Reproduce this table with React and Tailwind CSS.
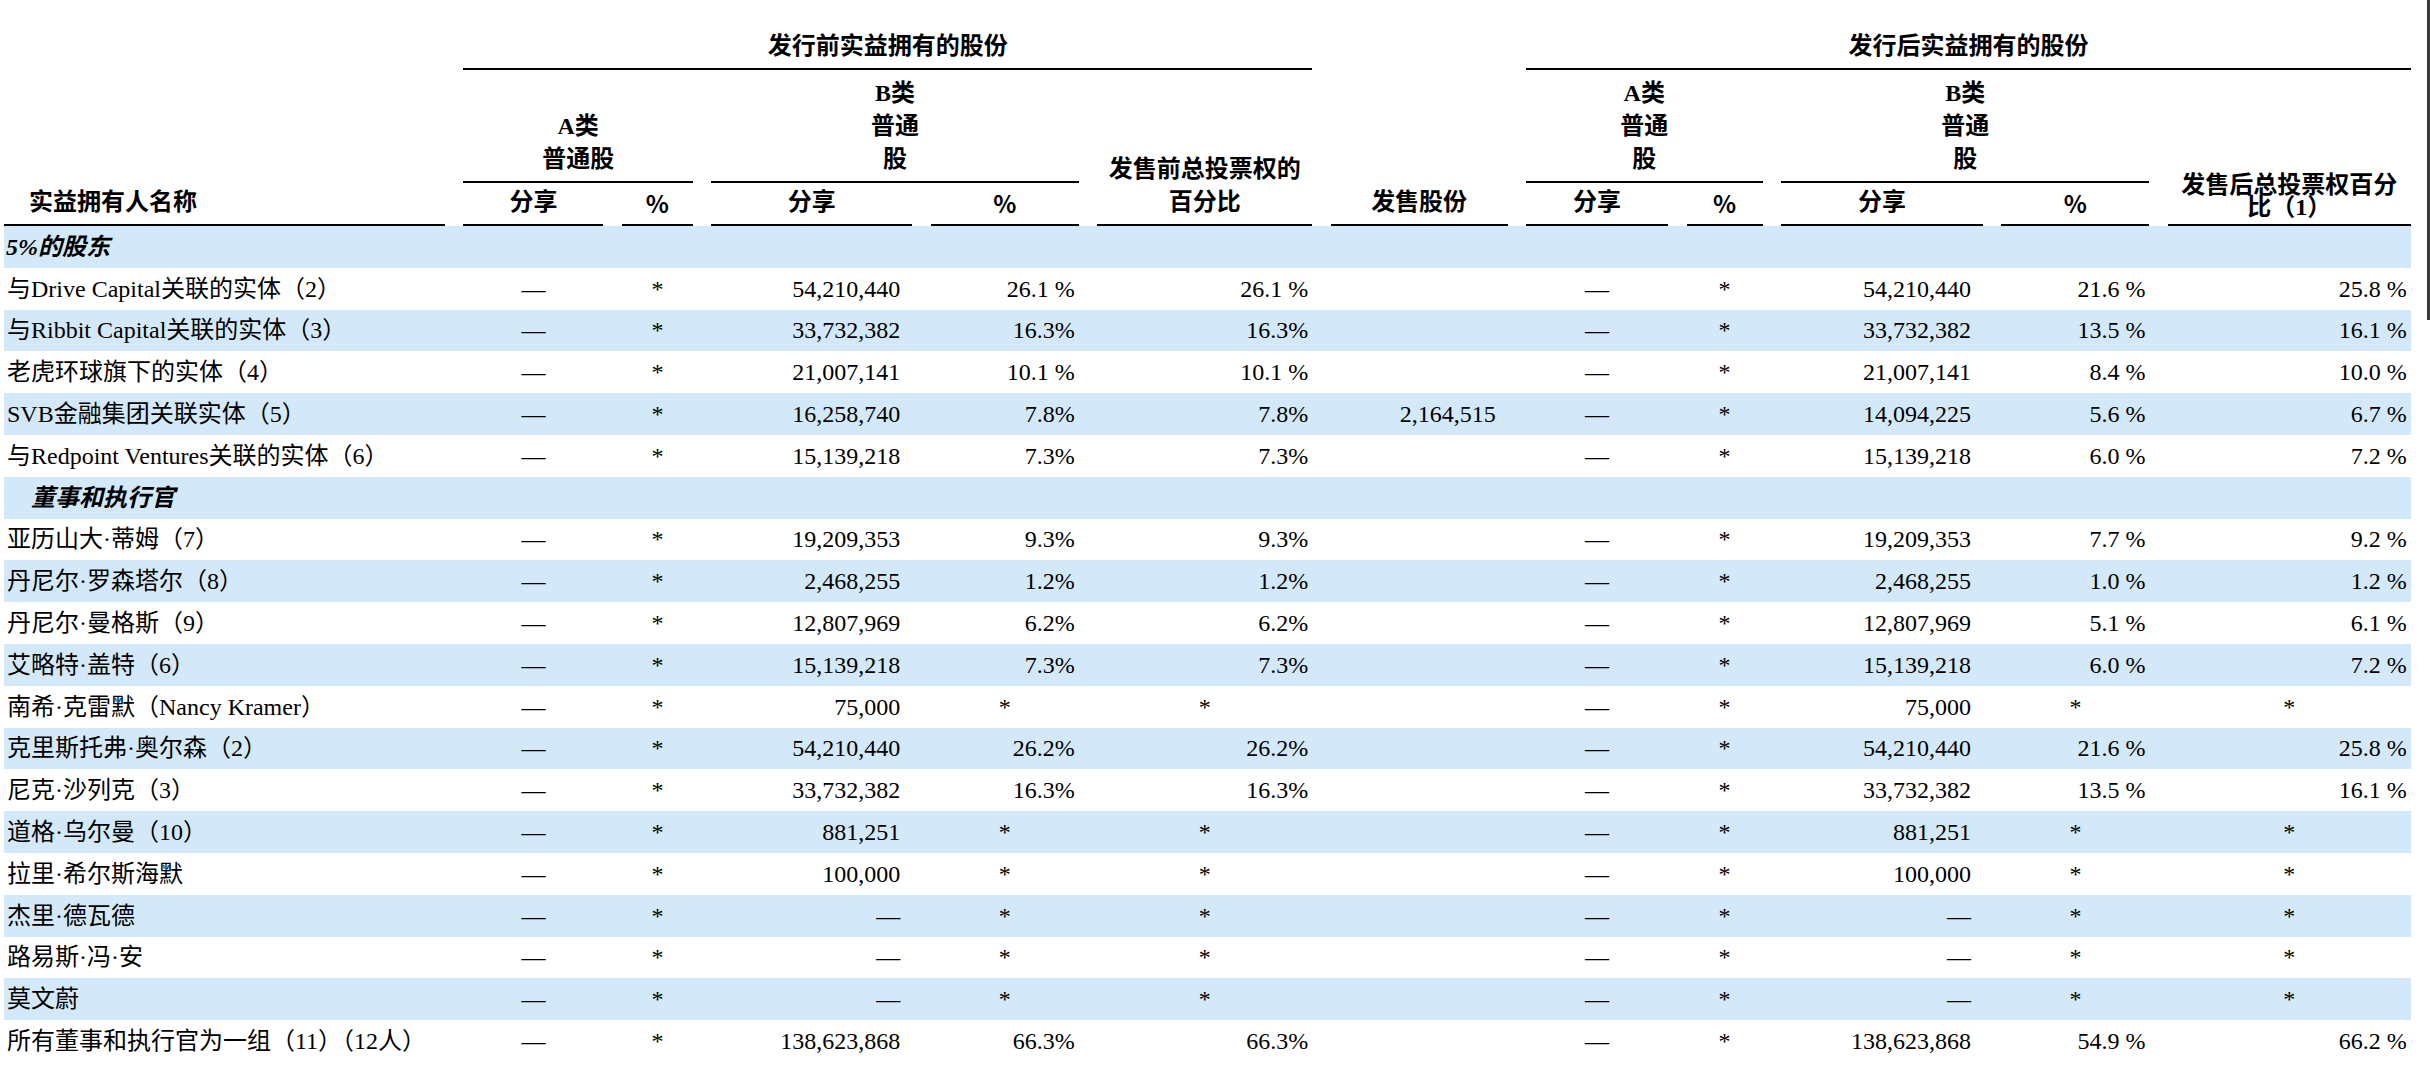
import React from "react";

const COLS =
  "grid grid-cols-[441px_140px_71px_201px_148px_215px_177px_142px_76px_202px_148px_243px] gap-x-[18.45px]";

const ROWS = [
  { section: "5%的股东" },
  ["与Drive Capital关联的实体（2）", "—", "*", "54,210,440", "26.1 %", "26.1 %", "", "—", "*", "54,210,440", "21.6 %", "25.8 %"],
  ["与Ribbit Capital关联的实体（3）", "—", "*", "33,732,382", "16.3%", "16.3%", "", "—", "*", "33,732,382", "13.5 %", "16.1 %"],
  ["老虎环球旗下的实体（4）", "—", "*", "21,007,141", "10.1 %", "10.1 %", "", "—", "*", "21,007,141", "8.4 %", "10.0 %"],
  ["SVB金融集团关联实体（5）", "—", "*", "16,258,740", "7.8%", "7.8%", "2,164,515", "—", "*", "14,094,225", "5.6 %", "6.7 %"],
  ["与Redpoint Ventures关联的实体（6）", "—", "*", "15,139,218", "7.3%", "7.3%", "", "—", "*", "15,139,218", "6.0 %", "7.2 %"],
  { section: "董事和执行官", indent: true },
  ["亚历山大·蒂姆（7）", "—", "*", "19,209,353", "9.3%", "9.3%", "", "—", "*", "19,209,353", "7.7 %", "9.2 %"],
  ["丹尼尔·罗森塔尔（8）", "—", "*", "2,468,255", "1.2%", "1.2%", "", "—", "*", "2,468,255", "1.0 %", "1.2 %"],
  ["丹尼尔·曼格斯（9）", "—", "*", "12,807,969", "6.2%", "6.2%", "", "—", "*", "12,807,969", "5.1 %", "6.1 %"],
  ["艾略特·盖特（6）", "—", "*", "15,139,218", "7.3%", "7.3%", "", "—", "*", "15,139,218", "6.0 %", "7.2 %"],
  ["南希·克雷默（Nancy Kramer）", "—", "*", "75,000", "*", "*", "", "—", "*", "75,000", "*", "*"],
  ["克里斯托弗·奥尔森（2）", "—", "*", "54,210,440", "26.2%", "26.2%", "", "—", "*", "54,210,440", "21.6 %", "25.8 %"],
  ["尼克·沙列克（3）", "—", "*", "33,732,382", "16.3%", "16.3%", "", "—", "*", "33,732,382", "13.5 %", "16.1 %"],
  ["道格·乌尔曼（10）", "—", "*", "881,251", "*", "*", "", "—", "*", "881,251", "*", "*"],
  ["拉里·希尔斯海默", "—", "*", "100,000", "*", "*", "", "—", "*", "100,000", "*", "*"],
  ["杰里·德瓦德", "—", "*", "—", "*", "*", "", "—", "*", "—", "*", "*"],
  ["路易斯·冯·安", "—", "*", "—", "*", "*", "", "—", "*", "—", "*", "*"],
  ["莫文蔚", "—", "*", "—", "*", "*", "", "—", "*", "—", "*", "*"],
  ["所有董事和执行官为一组（11）（12人）", "—", "*", "138,623,868", "66.3%", "66.3%", "", "—", "*", "138,623,868", "54.9 %", "66.2 %"],
];

const CENTER_COLS = new Set([1, 2, 7, 8]);
const SHARE_COLS = new Set([3, 6, 9]);

function cellClass(i, v) {
  if (i === 0) return "pl-[3px] text-left whitespace-nowrap";
  if (CENTER_COLS.has(i) || v === "*") return "text-center";
  if (SHARE_COLS.has(i)) return "text-right pr-[12px]";
  return "text-right pr-[4px]";
}

const Pct = () => <span className="font-['Noto_Sans_CJK_SC',sans-serif]">%</span>;

const H = "border-b-2 border-black flex items-end justify-center text-center pb-[5px] leading-[33px]";

export default function App() {
  return (
    <div className="bg-white w-[2430px] min-h-[1072px] pl-[4px] flex text-black font-['Liberation_Serif','Noto_Sans_CJK_SC',serif] text-[24px]">
      <div className="w-[2407px] shrink-0">
        {/* Header */}
        <div className={`${COLS} grid-rows-[70px_113px_43px] font-bold`}>
          <div className="col-start-1 row-start-1 row-span-3 border-b-2 border-black flex items-end pl-[25px] pb-[5px] leading-[33px]">
            实益拥有人名称
          </div>
          <div className={`col-start-2 col-span-5 row-start-1 ${H}`}>发行前实益拥有的股份</div>
          <div className={`col-start-7 row-start-1 row-span-3 ${H}`}>发售股份</div>
          <div className={`col-start-8 col-span-5 row-start-1 ${H}`}>发行后实益拥有的股份</div>

          <div className={`col-start-2 col-span-2 row-start-2 ${H}`}>
            <div>A类<br />普通股</div>
          </div>
          <div className={`col-start-4 col-span-2 row-start-2 ${H}`}>
            <div>B类<br />普通<br />股</div>
          </div>
          <div className={`col-start-6 row-start-2 row-span-2 ${H}`}>
            <div>发售前总投票权的<br />百分比</div>
          </div>
          <div className={`col-start-8 col-span-2 row-start-2 ${H}`}>
            <div>A类<br />普通<br />股</div>
          </div>
          <div className={`col-start-10 col-span-2 row-start-2 ${H}`}>
            <div>B类<br />普通<br />股</div>
          </div>
          <div className="col-start-12 row-start-2 row-span-2 border-b-2 border-black flex items-end justify-center text-center pb-[6px] leading-[22px]">
            <div>发售后总投票权百分<br />比（1）</div>
          </div>

          <div className={`col-start-2 row-start-3 ${H}`}>分享</div>
          <div className={`col-start-3 row-start-3 ${H}`}><Pct /></div>
          <div className={`col-start-4 row-start-3 ${H}`}>分享</div>
          <div className={`col-start-5 row-start-3 ${H}`}><Pct /></div>
          <div className={`col-start-8 row-start-3 ${H}`}>分享</div>
          <div className={`col-start-9 row-start-3 ${H}`}><Pct /></div>
          <div className={`col-start-10 row-start-3 ${H}`}>分享</div>
          <div className={`col-start-11 row-start-3 ${H}`}><Pct /></div>
        </div>

        {/* Body */}
        {ROWS.map((r, idx) => {
          const bg = idx % 2 === 0 ? "bg-[#d3e9f9]" : "bg-white";
          if (!Array.isArray(r)) {
            return (
              <div key={idx} className={`${COLS} h-[41.8px] items-center ${bg}`}>
                <div className={`font-bold italic whitespace-nowrap ${r.indent ? "pl-[27px]" : "pl-[2px]"}`}>
                  {r.section}
                </div>
              </div>
            );
          }
          return (
            <div key={idx} className={`${COLS} h-[41.8px] items-center ${bg}`}>
              {r.map((v, i) => (
                <div key={i} className={cellClass(i, v)}>
                  {v}
                </div>
              ))}
            </div>
          );
        })}
      </div>
      <div className="ml-auto w-[3px] h-[320px] bg-[#3a3a3a]" />
    </div>
  );
}
